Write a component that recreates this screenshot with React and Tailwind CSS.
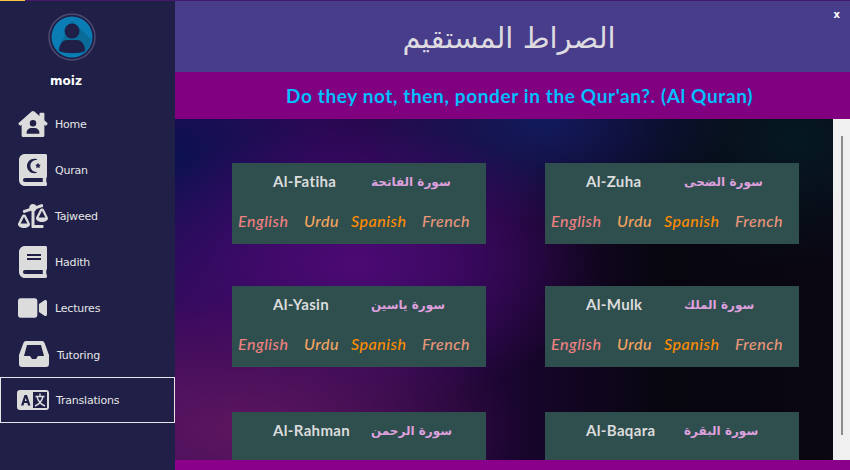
import React from "react";
import {
  FaHouseUser,
  FaQuran,
  FaBalanceScaleLeft,
  FaBook,
  FaVideo,
} from "react-icons/fa";

const InboxIcon = ({ className }) => (
  <svg viewBox="0 0 30 26" className={className}>
    <path
      fill="#dcdcdc"
      fillRule="evenodd"
      d="M7 0 H23 Q25 0 25.6 2 L30 14 V23 Q30 26 27 26 H3 Q0 26 0 23 V14 L4.4 2 Q5 0 7 0 Z M8 4 L5 15 H11 L13 18 H17 L19 15 H25 L22 4 Z"
    />
  </svg>
);

const LanguageIcon = ({ className }) => (
  <svg viewBox="0 0 32 20" className={className}>
    <rect width="32" height="20" rx="3" fill="#dcdcdc" />
    <rect x="16" y="2" width="14" height="16" fill="#1f1f47" />
    <path fill="#1f1f47" d="M4 15.5 L7.5 5 H10 L13.5 15.5 H11 L10.3 13 H7.2 L6.5 15.5 Z M7.8 11 H9.7 L8.75 7.8 Z" />
    <path
      fill="none"
      stroke="#dcdcdc"
      strokeWidth="1.4"
      d="M23 3.5 V6 M18.5 6.5 H27.5 M20 6.5 C21 11 24 14.5 28 16 M26 6.5 C25 11 22 14.5 18 16"
    />
  </svg>
);

const NAV = [
  { label: "Home", Icon: FaHouseUser, box: "w-[30px] h-[26px]", text: "pt-[2px]" },
  { label: "Quran", Icon: FaQuran, box: "w-[28px] h-[32px] ml-px", text: "pt-[2px]" },
  { label: "Tajweed", Icon: FaBalanceScaleLeft, box: "w-[30px] h-[24px]", text: "pt-[2px]" },
  { label: "Hadith", Icon: FaBook, box: "w-[28px] h-[32px] ml-px", text: "pt-[2px]" },
  { label: "Lectures", Icon: FaVideo, box: "w-[29px] h-[26px]", text: "pt-[2px]" },
  { label: "Tutoring", Icon: InboxIcon, box: "w-[30px] h-[26px] ml-px", text: "pt-[4px] pl-[2px]" },
];

const SURAHS = [
  [
    { name: "Al-Fatiha", arabic: "سورة الفاتحة" },
    { name: "Al-Zuha", arabic: "سورة الضحى" },
  ],
  [
    { name: "Al-Yasin", arabic: "سورة ياسين" },
    { name: "Al-Mulk", arabic: "سورة الملك" },
  ],
  [
    { name: "Al-Rahman", arabic: "سورة الرحمن" },
    { name: "Al-Baqara", arabic: "سورة البقرة" },
  ],
];

const Avatar = () => (
  <svg width="48" height="48" viewBox="0 0 48 48" className="ml-[48px]">
    <circle cx="24" cy="24" r="23" fill="none" stroke="#4d4a70" strokeWidth="1.5" />
    <circle cx="24" cy="24" r="20.5" fill="#0a7db5" />
    <path d="M24 8 L43 26 A20.5 20.5 0 0 1 34 41 L10 37 L14 28 Z" fill="#0a6a98" />
    <circle cx="24" cy="18" r="7.5" fill="#1f1f47" />
    <path d="M11 38 C11 30 16 27 19 27 L29 27 C32 27 37 30 37 38 C30 41 18 41 11 38 Z" fill="#1f1f47" />
  </svg>
);

const Card = ({ name, arabic }) => (
  <div className="h-[81px] bg-[#2f4f4f] font-['Lato',sans-serif]">
    <div className="flex items-center h-6 translate-y-[6px] pl-[41px]">
      <span className="w-[98px] text-[15px] font-bold text-[#dcdcdc] tracking-[0.35px]">{name}</span>
      <span dir="rtl" className="pt-[2px] font-['DejaVu_Sans',sans-serif] text-[12px] font-bold text-[#dda0dd]">
        {arabic}
      </span>
    </div>
    <div className="flex items-center h-6 mt-[22px] pl-[6px] text-[16px] italic font-medium tracking-[0.5px]">
      <span className="w-[66px] text-[#f08080]">English</span>
      <span className="w-[47px] text-[#f4a460]">Urdu</span>
      <span className="w-[71px] text-[#ff8c00]">Spanish</span>
      <span className="text-[#e9967a]">French</span>
    </div>
  </div>
);

export default function App() {
  return (
    <div className="w-[850px] h-[470px] flex flex-col overflow-hidden bg-[#1f1f47]">
      <div className="h-px bg-[#44186b] shrink-0">
        <div className="h-px w-[25px] bg-[#f5c542]" />
      </div>
      <div className="flex flex-1 min-h-0">
        <aside className="w-[175px] shrink-0 bg-[#1f1f47] pt-3 font-['DejaVu_Sans',sans-serif]">
          <Avatar />
          <div className="h-[40px] flex items-center justify-center pr-[43px] text-[12px] font-bold text-white">
            moiz
          </div>
          <nav className="tracking-[-0.2px]">
            {NAV.map(({ label, Icon, box, text }) => (
              <div key={label} className="h-[46px] flex items-center pl-[18px] text-[11px] text-[#e6e6e6]">
                <div className="w-[37px] shrink-0 flex items-center">
                  <Icon className={`${box} text-[#dcdcdc]`} />
                </div>
                <span className={text}>{label}</span>
              </div>
            ))}
            <div className="h-[46px] flex items-center pl-[16px] border border-[#e6e6e6] text-[11px] text-[#e6e6e6]">
              <div className="w-[39px] shrink-0">
                <LanguageIcon className="w-[32px] h-[20px]" />
              </div>
              <span className="pt-[2px]">Translations</span>
            </div>
          </nav>
        </aside>
        <main className="flex-1 min-w-0 flex flex-col">
          <header className="relative h-[71px] shrink-0 bg-[#483d8b] flex items-center justify-center pr-[7px] pt-[5px]">
            <h1 dir="rtl" className="font-['DejaVu_Sans',sans-serif] text-[29px] text-[#dedbe0]">
              الصراط المستقيم
            </h1>
            <span className="absolute top-[6px] right-[10px] font-['DejaVu_Sans',sans-serif] text-[10px] font-bold text-white">
              x
            </span>
          </header>
          <div className="h-[47px] shrink-0 bg-[#800080] flex items-center pl-[111px] pt-[2px] font-['Lato',sans-serif] text-[19px] font-bold tracking-[0.62px] text-[#00bfff]">
            Do they not, then, ponder in the Qur'an?. (Al Quran)
          </div>
          <div className="flex flex-1 min-h-0">
            <div className="flex-1 min-w-0 overflow-hidden pt-[44px] pl-[57px] bg-[#0a0612] bg-[radial-gradient(ellipse_280px_130px_at_70px_310px,#5e1660_0%,transparent_100%),radial-gradient(ellipse_250px_140px_at_180px_145px,#4c0a74_0%,transparent_100%),radial-gradient(ellipse_190px_100px_at_370px_5px,#121a5c_0%,transparent_100%),radial-gradient(ellipse_170px_130px_at_620px_20px,#051822_0%,transparent_100%),radial-gradient(ellipse_150px_170px_at_0px_40px,#0c1150_0%,transparent_100%),radial-gradient(ellipse_280px_240px_at_120px_80px,#2a0858_0%,transparent_100%),linear-gradient(90deg,#3a0a5c_0%,#1a0530_50%,#07060f_75%,#0a0612_100%)]">
              {SURAHS.map((row, i) => (
                <div
                  key={i}
                  className={`grid grid-cols-[254px_254px] gap-x-[59px] ${i === 2 ? "mt-[45px]" : i === 1 ? "mt-[42px]" : ""}`}
                >
                  {row.map((s) => (
                    <Card key={s.name} {...s} />
                  ))}
                </div>
              ))}
            </div>
            <div className="w-[17px] shrink-0 bg-[#f0f0f0] pt-[17px] pl-2">
              <div className="w-[2px] h-[299px] bg-[#8c8c8c]" />
            </div>
          </div>
          <div className="h-[10px] shrink-0 bg-[#8b008b]" />
        </main>
      </div>
    </div>
  );
}
